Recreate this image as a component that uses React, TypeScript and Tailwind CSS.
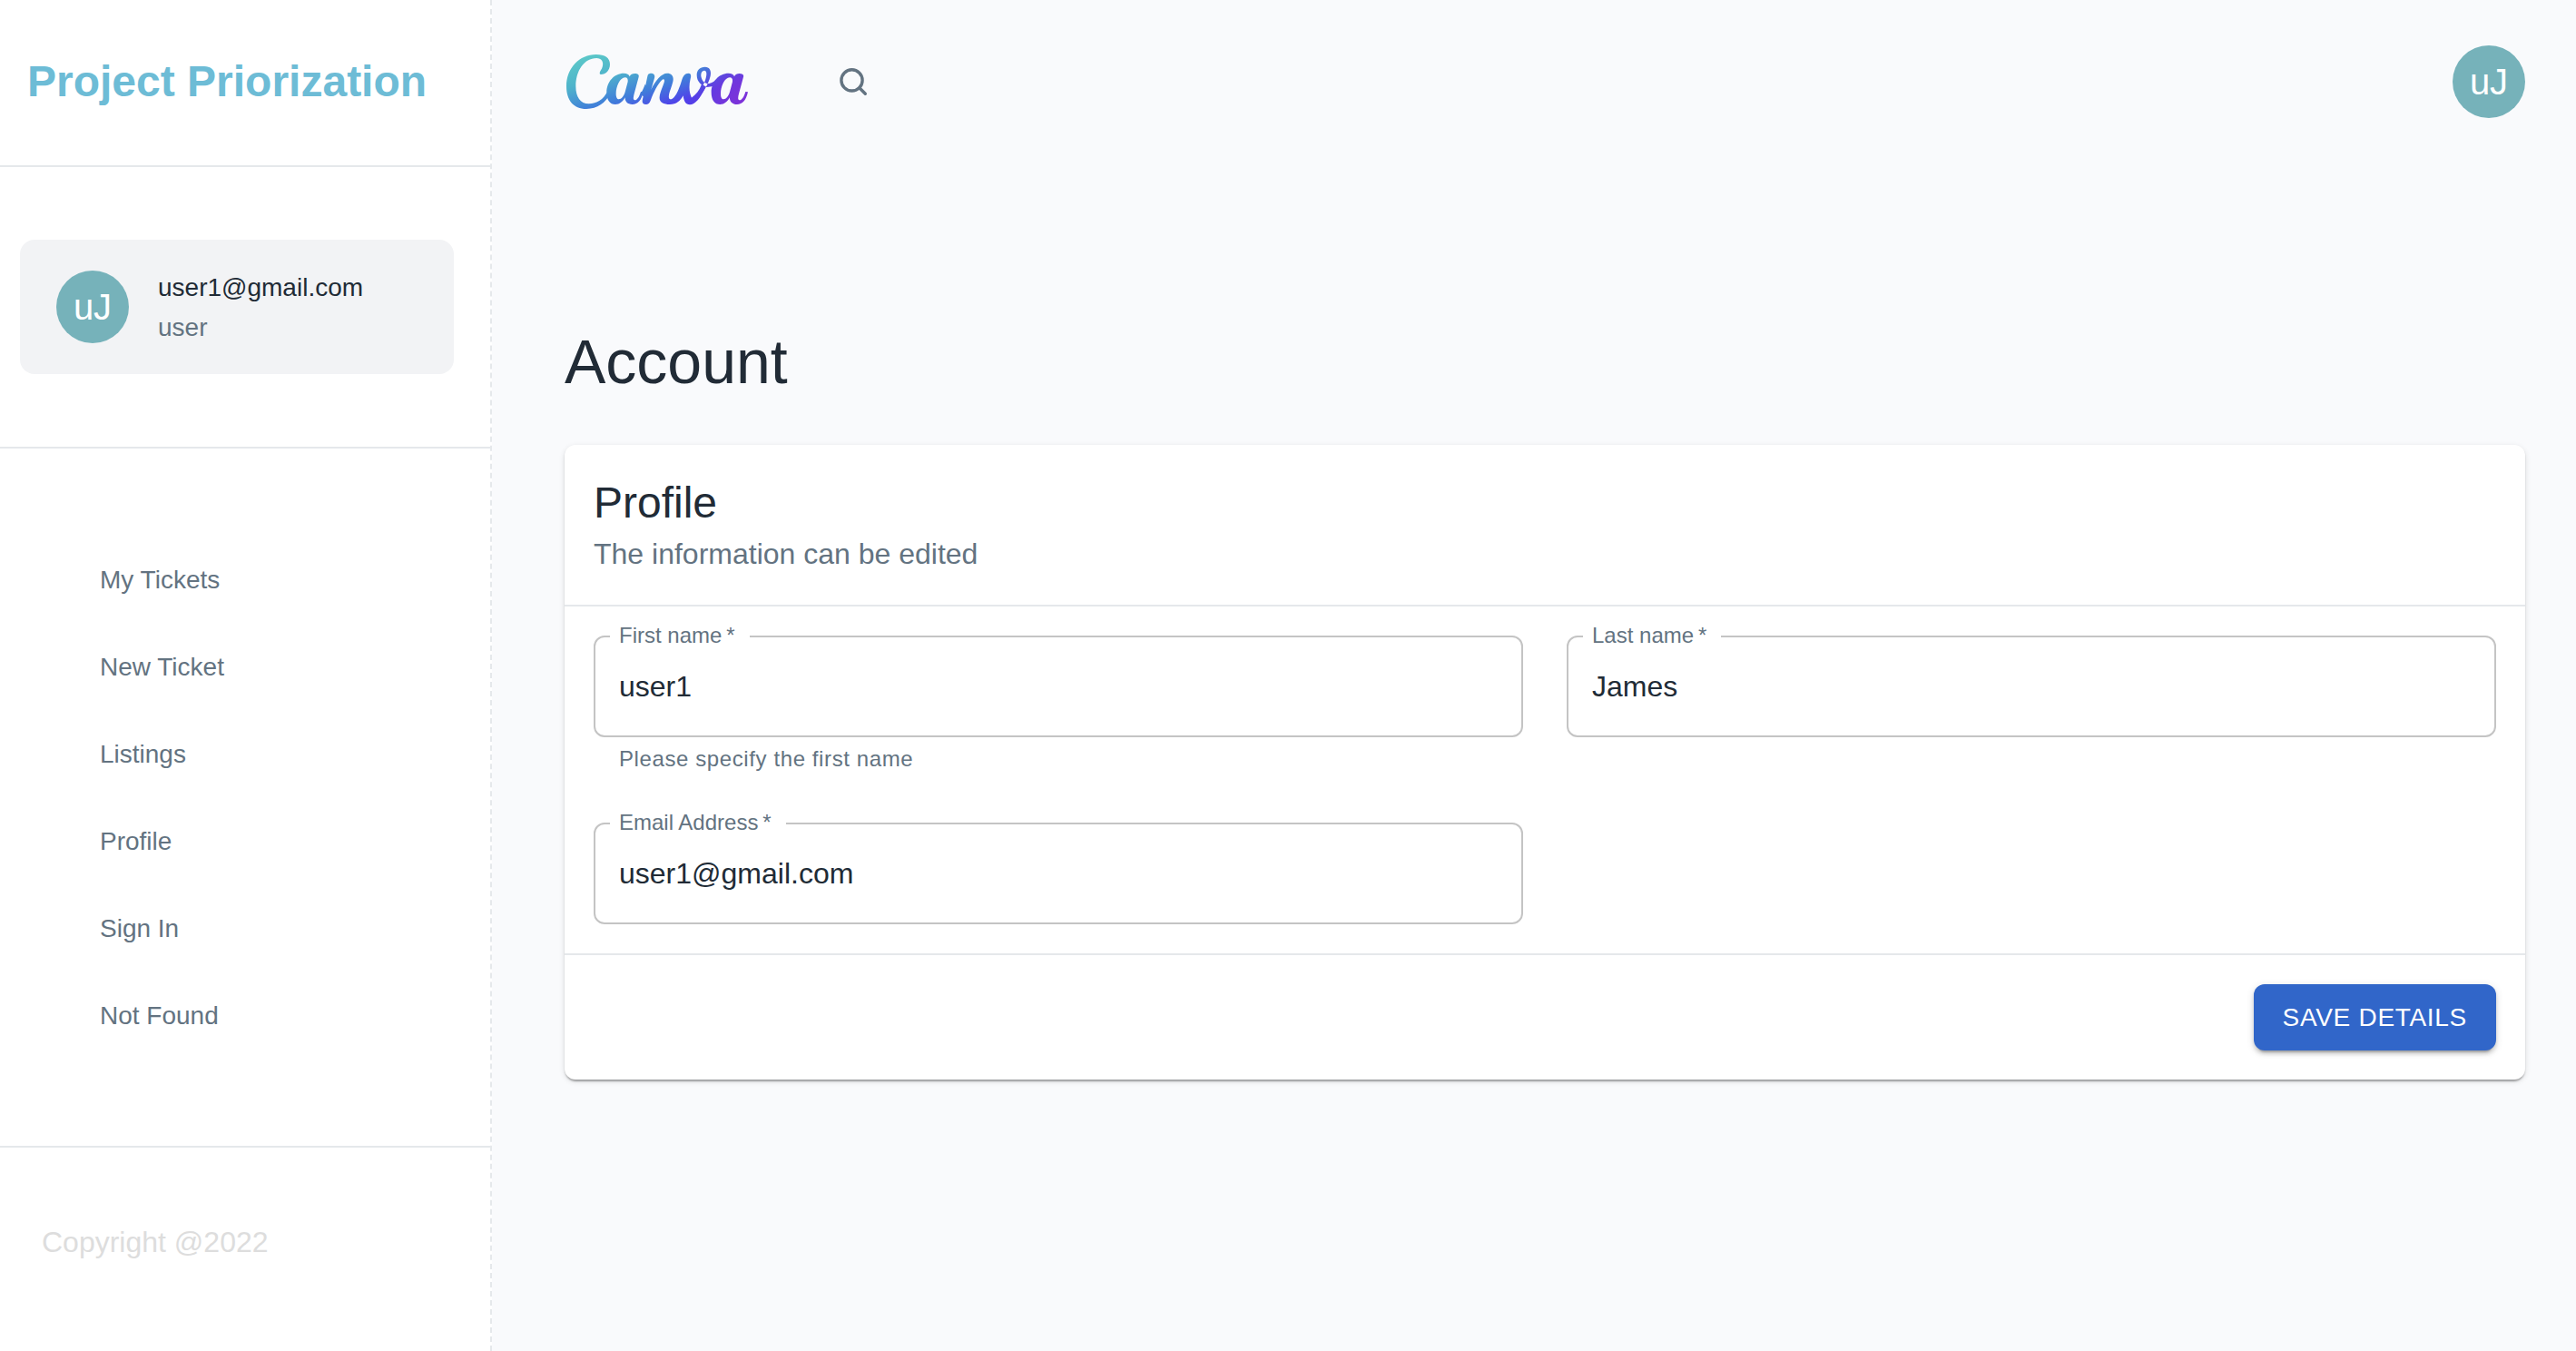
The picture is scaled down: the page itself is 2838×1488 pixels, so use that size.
import { useState } from 'react';

const navItems = ['My Tickets', 'New Ticket', 'Listings', 'Profile', 'Sign In', 'Not Found'];

function Avatar() {
  return (
    <span className="flex size-20 shrink-0 items-center justify-center rounded-full bg-[#76b2ba] text-[40px] leading-10 text-white">
      uJ
    </span>
  );
}

const scriptLoop =
  'M262 122C272 122 279 126 281 133C284 126 290 123 298 123C308 123 313 127 311 134L296 190C293 202 292 210 298 211C306 211 313 200 318 183L326 184C320 212 308 225 290 225C274 225 265 215 266 202C258 216 248 225 234 225C216 225 205 210 205 185C205 150 230 122 262 122ZM266 136C249 136 236 165 236 190C236 203 240 208 245 208C254 208 262 198 266 184L275 150C276 141 273 136 266 136Z';

function CanvaLogo() {
  return (
    <svg role="img" aria-label="Canva" viewBox="72 60 600 180" className="h-[60px] w-[200px]">
      <defs>
        <linearGradient id="logo-base" gradientUnits="userSpaceOnUse" x1="31" y1="95" x2="107" y2="328">
          <stop offset="0" stopColor="#5cc8c8" />
          <stop offset="0.35" stopColor="#4fb4cb" />
          <stop offset="0.72" stopColor="#407cda" />
          <stop offset="1" stopColor="#5040ea" />
        </linearGradient>
        <radialGradient id="logo-violet" gradientUnits="userSpaceOnUse" cx="660" cy="225" r="200">
          <stop offset="0" stopColor="#8030d8" />
          <stop offset="0.4" stopColor="#7635da" stopOpacity="0.85" />
          <stop offset="1" stopColor="#6038e0" stopOpacity="0" />
        </radialGradient>
        <mask id="logo-shape" maskUnits="userSpaceOnUse" x="60" y="50" width="630" height="200">
          <g fill="white" fillRule="evenodd">
            <path d="M186 126C180 126 182 118 186 112C196 98 197 72 172 72C130 72 103 115 103 165C103 200 118 223 146 223C173 223 194 208 207 184L218 190C200 220 175 240 138 240C95 240 72 210 72 165C72 105 115 60 170 60C200 60 216 72 216 92C216 112 202 126 186 126Z" />
            <path d={scriptLoop} />
            <path d="M348 123C360 121 366 127 363 138L352 176C366 146 386 122 405 122C421 122 428 133 424 150C420 168 408 192 411 203C413 211 421 209 428 201C440 187 447 165 453 146C458 130 464 122 475 122C484 122 485 130 482 140C476 165 478 188 486 203C500 192 512 178 519 158L532 166C520 195 502 225 480 226C466 226 460 214 458 196C448 214 436 225 414 225C392 225 378 217 380 200C382 182 394 160 396 148C397 142 392 140 388 144C375 156 360 185 351 210C347 222 342 225 334 225C325 225 321 219 324 208L340 132C341 126 344 124 348 123Z" />
            <path d="M316 192C322 182 328 170 332 158L340 170L330 200Z" />
            <path transform="translate(346 0)" d={scriptLoop} />
            <path d="M486 204C506 190 523 168 530 148C537 128 537 113 528 113C519 113 515 124 518 136C521 150 532 158 544 156C556 154 566 146 574 136L578 150C568 160 556 167 542 167C520 167 503 150 503 128C503 112 513 101 530 101C545 101 552 113 548 131C541 160 520 194 498 214Z" />
          </g>
        </mask>
      </defs>
      <g mask="url(#logo-shape)">
        <rect x="60" y="50" width="630" height="200" fill="url(#logo-base)" />
        <rect x="60" y="50" width="630" height="200" fill="url(#logo-violet)" />
      </g>
    </svg>
  );
}

function SearchIcon() {
  return (
    <svg viewBox="0 0 32 32" className="size-8" fill="none" stroke="#637381" strokeWidth="3.4" strokeLinecap="round">
      <circle cx="14.5" cy="14.4" r="11.6" />
      <path d="M22.8 22.8L29.3 29.2" />
    </svg>
  );
}

type FieldProps = {
  id: string;
  label: string;
  initial: string;
  type?: string;
  helper?: string;
};

function Field({ id, label, initial, type = 'text', helper }: FieldProps) {
  const [value, setValue] = useState(initial);
  return (
    <div className="relative">
      <label
        htmlFor={id}
        className="absolute -top-3 left-[18px] bg-white pr-4 pl-[10px] text-2xl leading-6 text-[#637381]"
      >
        {label}
        {'\u2009*'}
      </label>
      <input
        id={id}
        type={type}
        required
        value={value}
        onChange={(event) => setValue(event.target.value)}
        className="block h-28 w-full rounded-xl border-2 border-[#c4c4c4] bg-transparent px-[26px] text-[32px] text-[#212b36] outline-none focus:border-[#3166c9]"
      />
      {helper && <p className="mt-1 mb-[2px] px-7 text-2xl leading-10 tracking-wide text-[#637381]">{helper}</p>}
    </div>
  );
}

export default function App() {
  return (
    <div className="flex min-h-screen bg-[#f9fafc] font-['Liberation_Sans',Arial,sans-serif] text-[#212b36]">
      <aside className="w-[542px] shrink-0 border-r-2 border-dashed border-[#e5e8eb] bg-white">
        <div className="border-b-2 border-[#e5e8eb] px-[30px] pt-[58px] pb-[60px]">
          <p className="text-5xl leading-[64px] font-bold whitespace-nowrap text-[#6dbcd6]">Project Priorization</p>
        </div>
        <div className="border-b-2 border-[#e5e8eb] py-20 pr-10 pl-[22px]">
          <a href="#account" className="flex h-[148px] items-center gap-8 rounded-2xl bg-[#f2f3f5] px-10">
            <Avatar />
            <span className="flex flex-col pt-[2px] text-[28px] leading-[44px]">
              <span>user1@gmail.com</span>
              <span className="text-[#637381]">user</span>
            </span>
          </a>
        </div>
        <nav className="border-b-2 border-[#e5e8eb] py-24">
          <ul>
            {navItems.map((item) => (
              <li key={item}>
                <a href="#" className="flex h-24 items-center px-[110px] pt-[2px] text-[28px] leading-[44px] text-[#637381]">
                  {item}
                </a>
              </li>
            ))}
          </ul>
        </nav>
        <p className="px-[46px] py-20 text-[32px] leading-[48px] text-[#dddddd]">Copyright @2022</p>
      </aside>

      <div className="min-w-0 flex-1 pr-14 pl-20">
        <header className="flex items-center pt-[50px]">
          <a href="#" className="ml-[2px]">
            <CanvaLogo />
          </a>
          <button type="button" aria-label="Search" className="ml-[100px]">
            <SearchIcon />
          </button>
          <button type="button" aria-label="Account menu" className="ml-auto">
            <Avatar />
          </button>
        </header>

        <main id="account" className="pt-[226px]">
          <h1 className="text-[68px] leading-[84px]">Account</h1>
          <form
            onSubmit={(event) => event.preventDefault()}
            className="mt-[50px] rounded-xl bg-white shadow-[0_4px_2px_-2px_rgba(0,0,0,0.2),0_2px_2px_0_rgba(0,0,0,0.14),0_2px_6px_0_rgba(0,0,0,0.12)]"
          >
            <div className="p-8">
              <h2 className="text-5xl leading-[64px]">Profile</h2>
              <p className="text-[32px] leading-[48px] text-[#637381]">The information can be edited</p>
            </div>
            <div className="grid grid-cols-2 gap-12 border-y-2 border-[#e5e8eb] p-8">
              <Field id="first-name" label="First name" initial="user1" helper="Please specify the first name" />
              <Field id="last-name" label="Last name" initial="James" />
              <Field id="email" type="email" label="Email Address" initial="user1@gmail.com" />
            </div>
            <div className="flex justify-end p-8">
              <button
                type="submit"
                className="rounded-xl bg-[#3166c9] px-8 py-3 text-[28px] leading-[49px] tracking-wide text-white shadow-[0_6px_2px_-4px_rgba(0,0,0,0.2),0_4px_4px_0_rgba(0,0,0,0.14),0_2px_10px_0_rgba(0,0,0,0.12)]"
              >
                SAVE DETAILS
              </button>
            </div>
          </form>
        </main>
      </div>
    </div>
  );
}
